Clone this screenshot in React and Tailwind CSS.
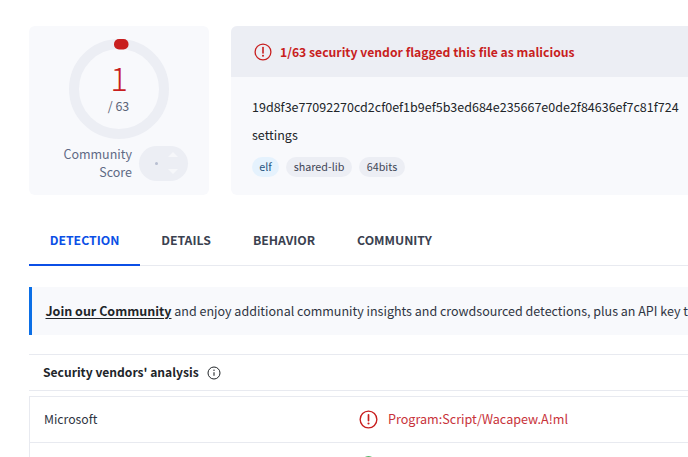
const FF = "font-['Noto_Sans_CJK_SC','Noto_Sans',sans-serif]";

function AlertIcon({ size = 18, className = "" }) {
  return (
    <svg width={size} height={size} viewBox="0 0 18 18" fill="none" className={className}>
      <circle cx="9" cy="9" r="7.9" stroke="#c81e1e" strokeWidth="1.3" />
      <path d="M9 4.6v5.4" stroke="#c81e1e" strokeWidth="1.6" strokeLinecap="round" />
      <circle cx="9" cy="12.8" r="1" fill="#c81e1e" />
    </svg>
  );
}

function Ring() {
  return (
    <div className="relative w-[100px] h-[100px]">
      <svg width="100" height="100" viewBox="0 0 100 100" className="block">
        <circle cx="50" cy="50" r="45" fill="none" stroke="#eceef4" strokeWidth="10" />
      </svg>
      <svg width="16" height="12" viewBox="0 0 16 12" className="absolute left-[44px] top-[-1px]">
        <rect x="1" y="1" width="14.5" height="10.4" rx="5" fill="#c81e1e" />
      </svg>
      <div className="absolute inset-0 flex flex-col items-center">
        <span className="mt-[18px] text-[33px] leading-[40px] text-[#c81e1e] font-light">1</span>
        <span className="mt-[1px] mr-[1px] text-[12.5px] leading-[16px] text-[#5b6478]">/ 63</span>
      </div>
    </div>
  );
}

function Tag({ children, blue, className = "" }) {
  return (
    <span className={`h-5 flex items-center justify-center rounded-full text-[10.75px] leading-5 ${blue ? "bg-[#e5f2fd] text-[#24527e]" : "bg-[#eceef4] text-[#3f4656]"} ${className}`}>
      {children}
    </span>
  );
}

export default function App() {
  return (
    <div className={`w-[688px] h-[457px] overflow-hidden bg-white ${FF}`}>
      <div className="w-[800px] pl-[29px] pt-[26px]">
        <div className="flex gap-[22px] h-[169px]">
          <div className="w-[180px] shrink-0 rounded-md bg-[#f8f9fc] flex flex-col items-center pt-[13px]">
            <Ring />
            <div className="mt-[6px] flex items-center gap-[7px] self-start ml-[33px]">
              <div className="w-[70px] text-right text-[12.5px] leading-[18px] text-[#5f6a85]">Community Score</div>
              <div className="relative w-[49px] h-[35px] rounded-full bg-[#eceef4] flex items-center">
                <span className="ml-[16px] w-[3px] h-[3px] rounded-full bg-[#b7bed0]" />
                <svg width="10" height="24" viewBox="0 0 10 24" className="absolute left-[29px] top-[5px]">
                  <path d="M5 1 L10 6 L0 6 Z M0 18 L10 18 L5 23 Z" fill="#f6f7fa" />
                </svg>
              </div>
            </div>
          </div>
          <div className="flex-1 rounded-md bg-[#f8f9fc] overflow-hidden">
            <div className="h-[51px] bg-[#eceef4] flex items-center pl-[23px] gap-[8px]">
              <AlertIcon />
              <span className="text-[12.2px] leading-5 font-semibold text-[#c81e1e]">1/63 security vendor flagged this file as malicious</span>
            </div>
            <div className="pl-[21px] pt-[20px]">
              <div className="text-[12.5px] leading-5 text-[#212529]">19d8f3e77092270cd2cf0ef1b9ef5b3ed684e235667e0de2f84636ef7c81f724</div>
              <div className="mt-[8px] text-[12.5px] leading-5 text-[#212529]">settings</div>
              <div className="mt-[12px] flex gap-[7px]">
                <Tag blue className="w-[27px]">elf</Tag>
                <Tag className="w-[66px]">shared-lib</Tag>
                <Tag className="w-[46px]">64bits</Tag>
              </div>
            </div>
          </div>
        </div>

        <div className="mt-[21px] h-[50px] flex border-b border-[#e8eaf0] text-[12.25px] font-semibold text-[#3a4150]">
          <div className="w-[111px] h-[50px] flex items-center justify-center text-[#0b4fe6] border-b-2 border-[#0b4fe6]">DETECTION</div>
          <div className="w-[92px] h-[48px] flex items-center justify-center">DETAILS</div>
          <div className="w-[104px] h-[48px] flex items-center justify-center">BEHAVIOR</div>
          <div className="w-[117px] h-[48px] flex items-center justify-center">COMMUNITY</div>
        </div>

        <div className="mt-[21px] h-[48px] bg-[#f8f9fc] border-l-[3px] border-[#0b6fe6] flex items-center pl-[13.5px] text-[12.5px] text-[#2f3542] whitespace-nowrap">
          <span className="font-bold text-[#212529] underline underline-offset-2">Join our Community</span>
          <span>&nbsp;and enjoy additional community insights and crowdsourced detections, plus an API key to</span>
        </div>

        <div className="mt-[19px] h-[37px] border-y border-[#e8eaf0] flex items-center pl-[14px] gap-[8px]">
          <span className="text-[12.1px] font-semibold text-[#212529]">Security vendors' analysis</span>
          <svg width="14" height="14" viewBox="0 0 14 14" fill="none">
            <circle cx="7" cy="7" r="6" stroke="#212529" strokeWidth="1" />
            <path d="M7 6.2v3.6" stroke="#212529" strokeWidth="1.1" />
            <circle cx="7" cy="4.2" r="0.7" fill="#212529" />
          </svg>
        </div>

        <div className="mt-[5px] border border-[#e8eaf0]">
          <div className="h-[46px] flex items-center border-b border-[#e8eaf0] pl-[14px]">
            <span className="w-[315px] text-[12.25px] text-[#2f3542]">Microsoft</span>
            <AlertIcon size={19} />
            <span className="ml-[10px] text-[12.6px] text-[#c8323a]">Program:Script/Wacapew.A!ml</span>
          </div>
          <div className="h-[46px] flex pl-[329px] pt-[13px]">
            <svg width="19" height="19" viewBox="0 0 19 19" fill="none">
              <circle cx="9.5" cy="9.5" r="8.5" stroke="#1f9d3a" strokeWidth="1.4" />
            </svg>
          </div>
        </div>
      </div>
    </div>
  );
}
